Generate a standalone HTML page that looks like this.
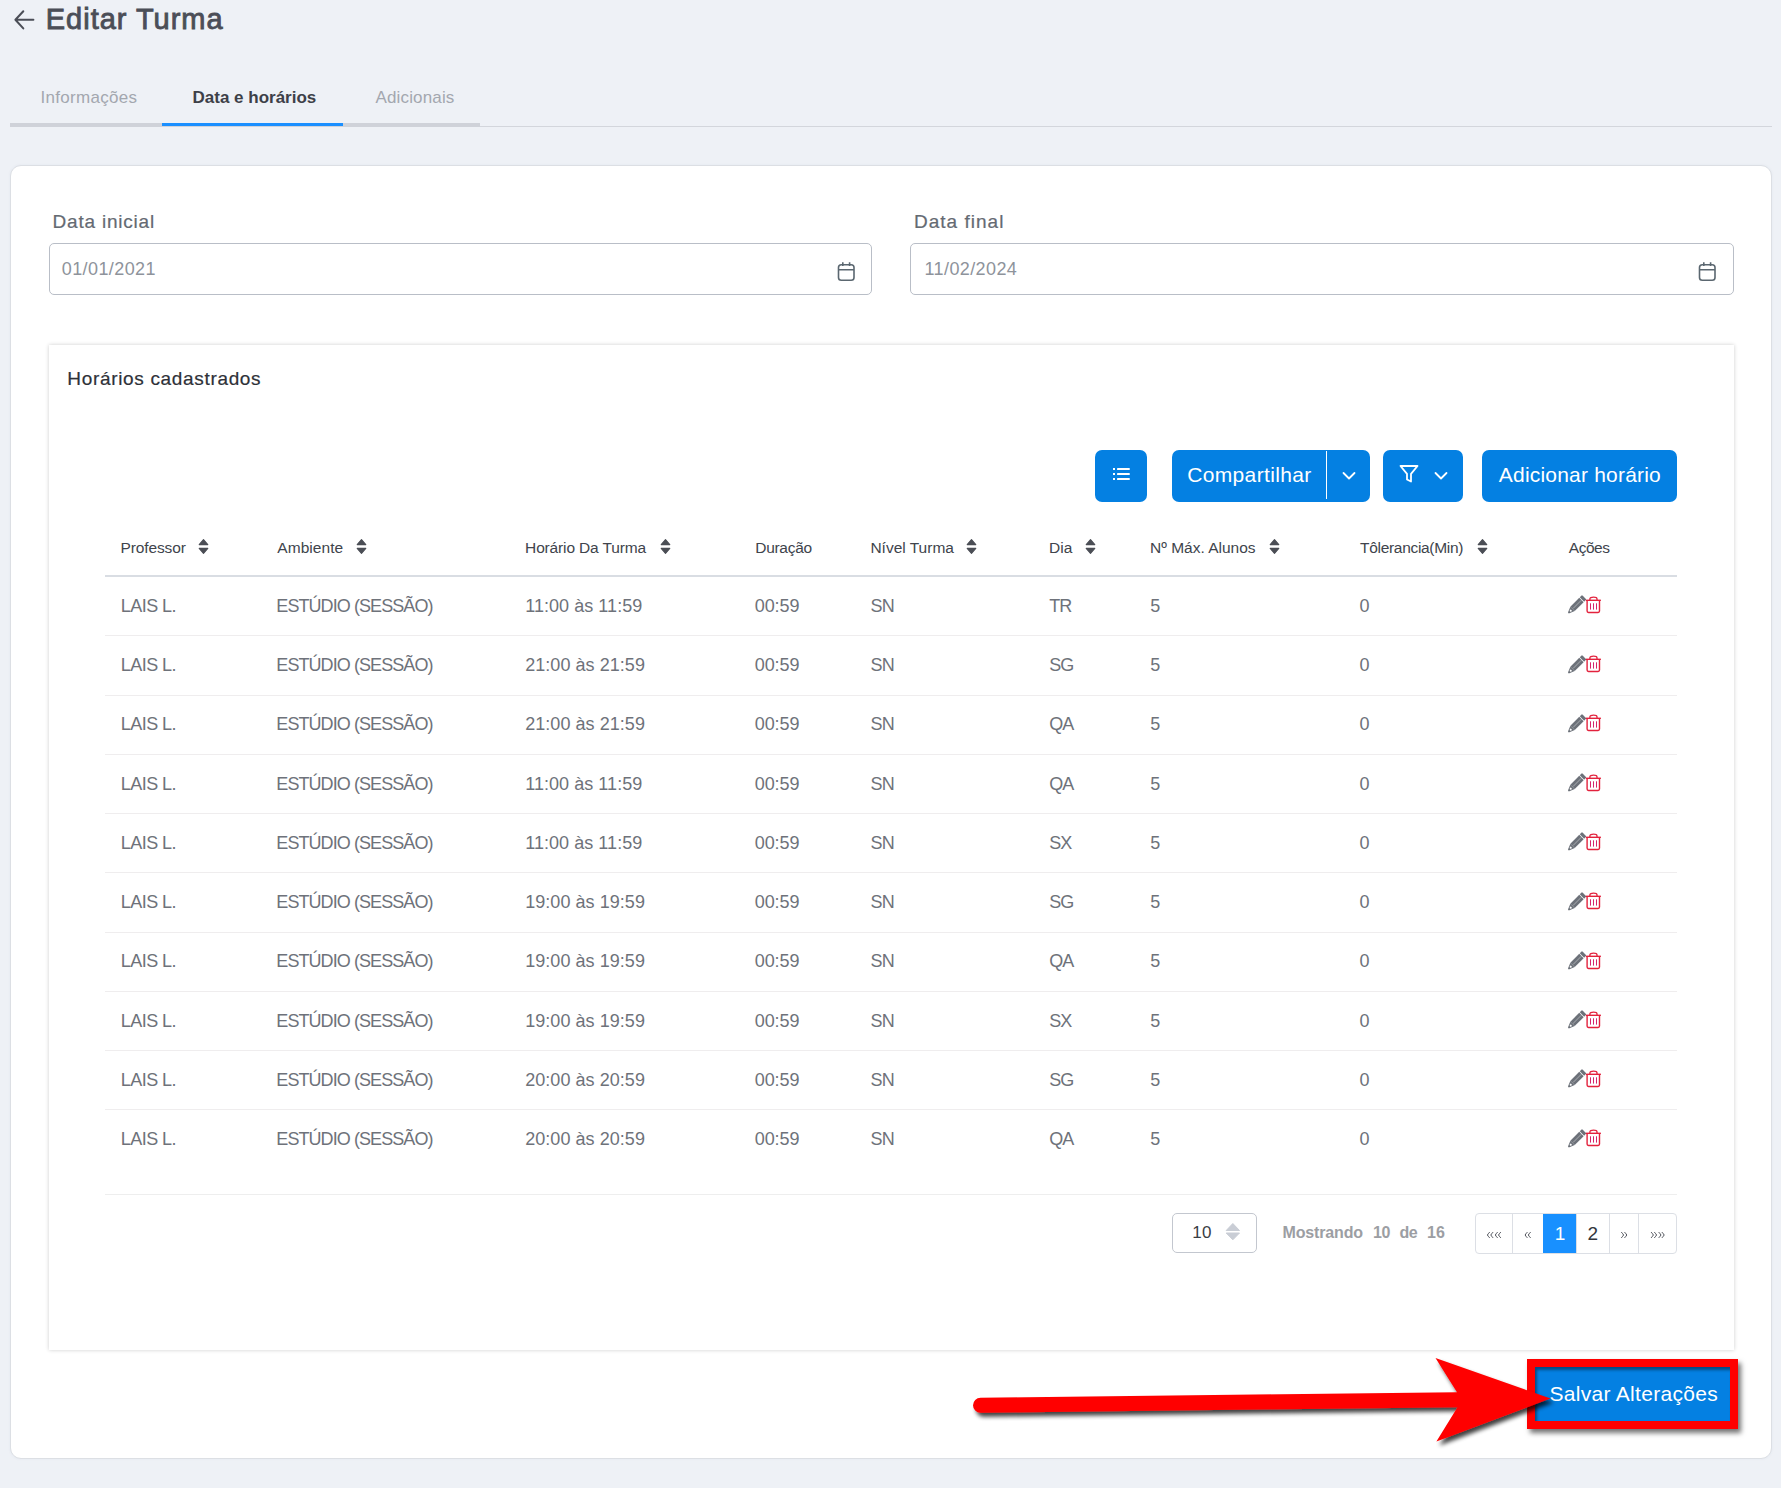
<!DOCTYPE html>
<html><head><meta charset="utf-8">
<style>
*{box-sizing:border-box;margin:0;padding:0}
html,body{width:1781px;height:1488px;overflow:hidden;background:#eef1f6;font-family:"Liberation Sans",sans-serif}
.a{position:absolute;white-space:pre;line-height:1}
.b{position:absolute}
</style></head><body>
<svg class="b" style="left:13px;top:9px" width="24" height="22" viewBox="0 0 24 22"><path d="M20.4 10.8H3M10.3 2.2L2.4 10.8L10.3 19.4" fill="none" stroke="#4b4e57" stroke-width="2" stroke-linecap="round" stroke-linejoin="round"/></svg>
<div class="a" style="left:45.8px;top:5.4px;font-size:29px;font-weight:400;color:#4b4e57;letter-spacing:0.98px;-webkit-text-stroke:0.85px #4b4e57">Editar Turma</div>
<div class="a" style="left:40.5px;top:88.5px;font-size:17px;font-weight:400;color:#a3a7af;letter-spacing:0.3px;">Informações</div>
<div class="a" style="left:192.5px;top:88.5px;font-size:17px;font-weight:700;color:#3d4048;letter-spacing:0px;">Data e horários</div>
<div class="a" style="left:375.5px;top:88.5px;font-size:17px;font-weight:400;color:#a3a7af;letter-spacing:0.15px;">Adicionais</div>
<div class="b" style="left:10px;top:126px;width:1762px;height:1px;background:#d3d6dc"></div>
<div class="b" style="left:10px;top:123px;width:470px;height:4px;background:#cfd2d9"></div>
<div class="b" style="left:162px;top:123px;width:181px;height:3px;background:#1a8fff"></div>
<div class="b" style="left:10px;top:165px;width:1762px;height:1294px;background:#fff;border:1px solid #dcdfe4;border-radius:11px;box-shadow:0 0 3px rgba(40,60,120,0.05)"></div>
<div class="a" style="left:52.6px;top:212.1px;font-size:19px;font-weight:400;color:#646a72;letter-spacing:0.78px;-webkit-text-stroke:0.2px #646a72">Data inicial</div>
<div class="a" style="left:913.9px;top:212.1px;font-size:19px;font-weight:400;color:#646a72;letter-spacing:1.03px;-webkit-text-stroke:0.2px #646a72">Data final</div>
<div class="b" style="left:49px;top:243px;width:823px;height:52px;border:1.5px solid #b9bec7;border-radius:5px"></div>
<div class="b" style="left:910px;top:243px;width:824px;height:52px;border:1.5px solid #b9bec7;border-radius:5px"></div>
<svg class="b" style="left:836.5px;top:261px" width="19" height="21" viewBox="0 0 19 21"><rect x="1.5" y="3.8" width="15.5" height="15.5" rx="2.8" fill="none" stroke="#5b6770" stroke-width="1.6"/><path d="M1.5 8.8H17M5.8 1.2V5M12.6 1.2V5" stroke="#5b6770" stroke-width="1.6" fill="none"/></svg>
<svg class="b" style="left:1697.5px;top:261px" width="19" height="21" viewBox="0 0 19 21"><rect x="1.5" y="3.8" width="15.5" height="15.5" rx="2.8" fill="none" stroke="#5b6770" stroke-width="1.6"/><path d="M1.5 8.8H17M5.8 1.2V5M12.6 1.2V5" stroke="#5b6770" stroke-width="1.6" fill="none"/></svg>
<div class="a" style="left:61.8px;top:259.8px;font-size:18px;font-weight:400;color:#8e939b;letter-spacing:0.4px;">01/01/2021</div>
<div class="a" style="left:924.5px;top:259.8px;font-size:18px;font-weight:400;color:#8e939b;letter-spacing:0.4px;">11/02/2024</div>
<div class="b" style="left:49px;top:345px;width:1685px;height:1005px;background:#fff;box-shadow:0 0 4px rgba(0,0,0,0.2)"></div>
<div class="a" style="left:67.3px;top:369.1px;font-size:19px;font-weight:400;color:#2e3138;letter-spacing:0.67px;-webkit-text-stroke:0.2px #2e3138">Horários cadastrados</div>
<div class="b" style="left:1095px;top:450px;width:52px;height:52px;background:#0480e2;border-radius:7px"></div>
<svg class="b" style="left:1112px;top:466px" width="19" height="16" viewBox="0 0 19 16"><g fill="#fff"><rect x="1" y="2" width="2" height="2"/><rect x="1" y="7" width="2" height="2"/><rect x="1" y="12" width="2" height="2"/><rect x="5" y="2" width="12.8" height="2" rx="0.4"/><rect x="5" y="7" width="12.8" height="2" rx="0.4"/><rect x="5" y="12" width="12.8" height="2" rx="0.4"/></g></svg>
<div class="b" style="left:1172px;top:450px;width:198px;height:52px;background:#0480e2;border-radius:7px"></div>
<div class="b" style="left:1326px;top:451px;width:1.2px;height:48px;background:#fff"></div>
<svg class="b" style="left:1340.5px;top:470px" width="16" height="11" viewBox="0 0 16 11"><path d="M2.5 3L8 8.5L13.5 3" fill="none" stroke="#fff" stroke-width="1.8" stroke-linecap="round" stroke-linejoin="round"/></svg>
<div class="a" style="left:1187.2px;top:464.3px;font-size:21px;font-weight:400;color:#fff;letter-spacing:0.35px;">Compartilhar</div>
<div class="b" style="left:1383px;top:450px;width:80px;height:52px;background:#0480e2;border-radius:7px"></div>
<svg class="b" style="left:1398px;top:464px" width="22" height="20" viewBox="0 0 22 20"><path d="M2.5 2H19.5L13 9.8V17.5L9 15.5V9.8Z" fill="none" stroke="#fff" stroke-width="1.8" stroke-linejoin="round"/></svg>
<svg class="b" style="left:1433px;top:470px" width="16" height="11" viewBox="0 0 16 11"><path d="M2.5 3L8 8.5L13.5 3" fill="none" stroke="#fff" stroke-width="1.8" stroke-linecap="round" stroke-linejoin="round"/></svg>
<div class="b" style="left:1482px;top:450px;width:195px;height:52px;background:#0480e2;border-radius:7px"></div>
<div class="a" style="left:1498.8px;top:464.2px;font-size:21px;font-weight:400;color:#fff;letter-spacing:0.2px;">Adicionar horário</div>
<div class="a" style="left:120.4px;top:540.1px;font-size:15.5px;font-weight:400;color:#40444c;letter-spacing:-0.1px;">Professor</div>
<svg class="b" style="left:198.3px;top:538px" width="11" height="17" viewBox="0 0 11 17"><path d="M5.5 1.6L9.8 6.6H1.2Z M1.2 10.4H9.8L5.5 15.4Z" fill="#4b4e55" stroke="#4b4e55" stroke-width="1.1" stroke-linejoin="round"/></svg>
<div class="a" style="left:277.3px;top:540.1px;font-size:15.5px;font-weight:400;color:#40444c;letter-spacing:0.05px;">Ambiente</div>
<svg class="b" style="left:355.5px;top:538px" width="11" height="17" viewBox="0 0 11 17"><path d="M5.5 1.6L9.8 6.6H1.2Z M1.2 10.4H9.8L5.5 15.4Z" fill="#4b4e55" stroke="#4b4e55" stroke-width="1.1" stroke-linejoin="round"/></svg>
<div class="a" style="left:525.1px;top:540.1px;font-size:15.5px;font-weight:400;color:#40444c;letter-spacing:-0.15px;">Horário Da Turma</div>
<svg class="b" style="left:659.5px;top:538px" width="11" height="17" viewBox="0 0 11 17"><path d="M5.5 1.6L9.8 6.6H1.2Z M1.2 10.4H9.8L5.5 15.4Z" fill="#4b4e55" stroke="#4b4e55" stroke-width="1.1" stroke-linejoin="round"/></svg>
<div class="a" style="left:755.3px;top:540.1px;font-size:15.5px;font-weight:400;color:#40444c;letter-spacing:-0.3px;">Duração</div>
<div class="a" style="left:870.4px;top:540.1px;font-size:15.5px;font-weight:400;color:#40444c;letter-spacing:0px;">Nível Turma</div>
<svg class="b" style="left:966.1px;top:538px" width="11" height="17" viewBox="0 0 11 17"><path d="M5.5 1.6L9.8 6.6H1.2Z M1.2 10.4H9.8L5.5 15.4Z" fill="#4b4e55" stroke="#4b4e55" stroke-width="1.1" stroke-linejoin="round"/></svg>
<div class="a" style="left:1049.0px;top:540.1px;font-size:15.5px;font-weight:400;color:#40444c;letter-spacing:0px;">Dia</div>
<svg class="b" style="left:1085.1px;top:538px" width="11" height="17" viewBox="0 0 11 17"><path d="M5.5 1.6L9.8 6.6H1.2Z M1.2 10.4H9.8L5.5 15.4Z" fill="#4b4e55" stroke="#4b4e55" stroke-width="1.1" stroke-linejoin="round"/></svg>
<div class="a" style="left:1150.0px;top:540.1px;font-size:15.5px;font-weight:400;color:#40444c;letter-spacing:0px;">Nº Máx. Alunos</div>
<svg class="b" style="left:1269.2px;top:538px" width="11" height="17" viewBox="0 0 11 17"><path d="M5.5 1.6L9.8 6.6H1.2Z M1.2 10.4H9.8L5.5 15.4Z" fill="#4b4e55" stroke="#4b4e55" stroke-width="1.1" stroke-linejoin="round"/></svg>
<div class="a" style="left:1360.0px;top:540.1px;font-size:15.5px;font-weight:400;color:#40444c;letter-spacing:-0.3px;">Tôlerancia(Min)</div>
<svg class="b" style="left:1477.3px;top:538px" width="11" height="17" viewBox="0 0 11 17"><path d="M5.5 1.6L9.8 6.6H1.2Z M1.2 10.4H9.8L5.5 15.4Z" fill="#4b4e55" stroke="#4b4e55" stroke-width="1.1" stroke-linejoin="round"/></svg>
<div class="a" style="left:1568.8px;top:540.1px;font-size:15.5px;font-weight:400;color:#40444c;letter-spacing:-0.5px;">Ações</div>
<div class="b" style="left:105px;top:575px;width:1572px;height:2px;background:#d9dde3"></div>
<div class="a" style="left:120.8px;top:596.9px;font-size:18px;font-weight:400;color:#6e727a;letter-spacing:-0.55px;">LAIS L.</div>
<div class="a" style="left:276.3px;top:596.9px;font-size:18px;font-weight:400;color:#6e727a;letter-spacing:-0.92px;">ESTÚDIO (SESSÃO)</div>
<div class="a" style="left:525.2px;top:596.9px;font-size:18px;font-weight:400;color:#6e727a;letter-spacing:0.05px;">11:00 às 11:59</div>
<div class="a" style="left:754.8px;top:596.9px;font-size:18px;font-weight:400;color:#6e727a;letter-spacing:-0.1px;">00:59</div>
<div class="a" style="left:870.6px;top:596.9px;font-size:18px;font-weight:400;color:#6e727a;letter-spacing:-0.9px;">SN</div>
<div class="a" style="left:1049.2px;top:596.9px;font-size:18px;font-weight:400;color:#6e727a;letter-spacing:-0.9px;">TR</div>
<div class="a" style="left:1150.3px;top:596.9px;font-size:18px;font-weight:400;color:#6e727a;letter-spacing:0px;">5</div>
<div class="a" style="left:1359.5px;top:596.9px;font-size:18px;font-weight:400;color:#6e727a;letter-spacing:0px;">0</div>
<svg class="b" style="left:1567px;top:595.3px" width="19" height="19" viewBox="0 0 19 19"><g transform="translate(9.3 10.1) rotate(45)"><path d="M-3.1 -8V-10.2Q-3.1 -11.2 -2.1 -11.2H2.1Q3.1 -11.2 3.1 -10.2V-8Z" fill="#6c7179"/><rect x="-3.1" y="-7.3" width="6.2" height="12.6" fill="#6c7179"/><path d="M-3.1 5.3H3.1L0.6 11.2H-0.6Z" fill="#6c7179"/><path d="M0.1 -7V4.6" stroke="#fff" stroke-width="0.55" opacity="0.7"/><circle cx="0" cy="7.9" r="1.05" fill="#fff"/></g></svg>
<svg class="b" style="left:1585px;top:596px" width="17" height="19" viewBox="0 0 17 19"><path d="M0.8 4.3H15.9" stroke="#e3223d" stroke-width="1.4"/><path d="M4.9 4.2V2.8Q4.9 1.2 8.45 1.2Q12 1.2 12 2.8V4.2" fill="none" stroke="#e3223d" stroke-width="1.3"/><path d="M2.1 4.3V15.1Q2.1 16.5 3.5 16.5H13.1Q14.5 16.5 14.5 15.1V4.3" fill="none" stroke="#e3223d" stroke-width="1.4"/><path d="M5.5 7.3V13.6M8.5 7.3V13.6M11.5 7.3V13.6" stroke="#d6246c" stroke-width="1"/></svg>
<div class="b" style="left:105px;top:635px;width:1572px;height:1px;background:#efedee"></div>
<div class="a" style="left:120.8px;top:656.1px;font-size:18px;font-weight:400;color:#6e727a;letter-spacing:-0.55px;">LAIS L.</div>
<div class="a" style="left:276.3px;top:656.1px;font-size:18px;font-weight:400;color:#6e727a;letter-spacing:-0.92px;">ESTÚDIO (SESSÃO)</div>
<div class="a" style="left:525.2px;top:656.1px;font-size:18px;font-weight:400;color:#6e727a;letter-spacing:0.05px;">21:00 às 21:59</div>
<div class="a" style="left:754.8px;top:656.1px;font-size:18px;font-weight:400;color:#6e727a;letter-spacing:-0.1px;">00:59</div>
<div class="a" style="left:870.6px;top:656.1px;font-size:18px;font-weight:400;color:#6e727a;letter-spacing:-0.9px;">SN</div>
<div class="a" style="left:1049.2px;top:656.1px;font-size:18px;font-weight:400;color:#6e727a;letter-spacing:-0.9px;">SG</div>
<div class="a" style="left:1150.3px;top:656.1px;font-size:18px;font-weight:400;color:#6e727a;letter-spacing:0px;">5</div>
<div class="a" style="left:1359.5px;top:656.1px;font-size:18px;font-weight:400;color:#6e727a;letter-spacing:0px;">0</div>
<svg class="b" style="left:1567px;top:654.6px" width="19" height="19" viewBox="0 0 19 19"><g transform="translate(9.3 10.1) rotate(45)"><path d="M-3.1 -8V-10.2Q-3.1 -11.2 -2.1 -11.2H2.1Q3.1 -11.2 3.1 -10.2V-8Z" fill="#6c7179"/><rect x="-3.1" y="-7.3" width="6.2" height="12.6" fill="#6c7179"/><path d="M-3.1 5.3H3.1L0.6 11.2H-0.6Z" fill="#6c7179"/><path d="M0.1 -7V4.6" stroke="#fff" stroke-width="0.55" opacity="0.7"/><circle cx="0" cy="7.9" r="1.05" fill="#fff"/></g></svg>
<svg class="b" style="left:1585px;top:655px" width="17" height="19" viewBox="0 0 17 19"><path d="M0.8 4.3H15.9" stroke="#e3223d" stroke-width="1.4"/><path d="M4.9 4.2V2.8Q4.9 1.2 8.45 1.2Q12 1.2 12 2.8V4.2" fill="none" stroke="#e3223d" stroke-width="1.3"/><path d="M2.1 4.3V15.1Q2.1 16.5 3.5 16.5H13.1Q14.5 16.5 14.5 15.1V4.3" fill="none" stroke="#e3223d" stroke-width="1.4"/><path d="M5.5 7.3V13.6M8.5 7.3V13.6M11.5 7.3V13.6" stroke="#d6246c" stroke-width="1"/></svg>
<div class="b" style="left:105px;top:695px;width:1572px;height:1px;background:#efedee"></div>
<div class="a" style="left:120.8px;top:715.4px;font-size:18px;font-weight:400;color:#6e727a;letter-spacing:-0.55px;">LAIS L.</div>
<div class="a" style="left:276.3px;top:715.4px;font-size:18px;font-weight:400;color:#6e727a;letter-spacing:-0.92px;">ESTÚDIO (SESSÃO)</div>
<div class="a" style="left:525.2px;top:715.4px;font-size:18px;font-weight:400;color:#6e727a;letter-spacing:0.05px;">21:00 às 21:59</div>
<div class="a" style="left:754.8px;top:715.4px;font-size:18px;font-weight:400;color:#6e727a;letter-spacing:-0.1px;">00:59</div>
<div class="a" style="left:870.6px;top:715.4px;font-size:18px;font-weight:400;color:#6e727a;letter-spacing:-0.9px;">SN</div>
<div class="a" style="left:1049.2px;top:715.4px;font-size:18px;font-weight:400;color:#6e727a;letter-spacing:-0.9px;">QA</div>
<div class="a" style="left:1150.3px;top:715.4px;font-size:18px;font-weight:400;color:#6e727a;letter-spacing:0px;">5</div>
<div class="a" style="left:1359.5px;top:715.4px;font-size:18px;font-weight:400;color:#6e727a;letter-spacing:0px;">0</div>
<svg class="b" style="left:1567px;top:713.8px" width="19" height="19" viewBox="0 0 19 19"><g transform="translate(9.3 10.1) rotate(45)"><path d="M-3.1 -8V-10.2Q-3.1 -11.2 -2.1 -11.2H2.1Q3.1 -11.2 3.1 -10.2V-8Z" fill="#6c7179"/><rect x="-3.1" y="-7.3" width="6.2" height="12.6" fill="#6c7179"/><path d="M-3.1 5.3H3.1L0.6 11.2H-0.6Z" fill="#6c7179"/><path d="M0.1 -7V4.6" stroke="#fff" stroke-width="0.55" opacity="0.7"/><circle cx="0" cy="7.9" r="1.05" fill="#fff"/></g></svg>
<svg class="b" style="left:1585px;top:714px" width="17" height="19" viewBox="0 0 17 19"><path d="M0.8 4.3H15.9" stroke="#e3223d" stroke-width="1.4"/><path d="M4.9 4.2V2.8Q4.9 1.2 8.45 1.2Q12 1.2 12 2.8V4.2" fill="none" stroke="#e3223d" stroke-width="1.3"/><path d="M2.1 4.3V15.1Q2.1 16.5 3.5 16.5H13.1Q14.5 16.5 14.5 15.1V4.3" fill="none" stroke="#e3223d" stroke-width="1.4"/><path d="M5.5 7.3V13.6M8.5 7.3V13.6M11.5 7.3V13.6" stroke="#d6246c" stroke-width="1"/></svg>
<div class="b" style="left:105px;top:754px;width:1572px;height:1px;background:#efedee"></div>
<div class="a" style="left:120.8px;top:774.6px;font-size:18px;font-weight:400;color:#6e727a;letter-spacing:-0.55px;">LAIS L.</div>
<div class="a" style="left:276.3px;top:774.6px;font-size:18px;font-weight:400;color:#6e727a;letter-spacing:-0.92px;">ESTÚDIO (SESSÃO)</div>
<div class="a" style="left:525.2px;top:774.6px;font-size:18px;font-weight:400;color:#6e727a;letter-spacing:0.05px;">11:00 às 11:59</div>
<div class="a" style="left:754.8px;top:774.6px;font-size:18px;font-weight:400;color:#6e727a;letter-spacing:-0.1px;">00:59</div>
<div class="a" style="left:870.6px;top:774.6px;font-size:18px;font-weight:400;color:#6e727a;letter-spacing:-0.9px;">SN</div>
<div class="a" style="left:1049.2px;top:774.6px;font-size:18px;font-weight:400;color:#6e727a;letter-spacing:-0.9px;">QA</div>
<div class="a" style="left:1150.3px;top:774.6px;font-size:18px;font-weight:400;color:#6e727a;letter-spacing:0px;">5</div>
<div class="a" style="left:1359.5px;top:774.6px;font-size:18px;font-weight:400;color:#6e727a;letter-spacing:0px;">0</div>
<svg class="b" style="left:1567px;top:773.1px" width="19" height="19" viewBox="0 0 19 19"><g transform="translate(9.3 10.1) rotate(45)"><path d="M-3.1 -8V-10.2Q-3.1 -11.2 -2.1 -11.2H2.1Q3.1 -11.2 3.1 -10.2V-8Z" fill="#6c7179"/><rect x="-3.1" y="-7.3" width="6.2" height="12.6" fill="#6c7179"/><path d="M-3.1 5.3H3.1L0.6 11.2H-0.6Z" fill="#6c7179"/><path d="M0.1 -7V4.6" stroke="#fff" stroke-width="0.55" opacity="0.7"/><circle cx="0" cy="7.9" r="1.05" fill="#fff"/></g></svg>
<svg class="b" style="left:1585px;top:774px" width="17" height="19" viewBox="0 0 17 19"><path d="M0.8 4.3H15.9" stroke="#e3223d" stroke-width="1.4"/><path d="M4.9 4.2V2.8Q4.9 1.2 8.45 1.2Q12 1.2 12 2.8V4.2" fill="none" stroke="#e3223d" stroke-width="1.3"/><path d="M2.1 4.3V15.1Q2.1 16.5 3.5 16.5H13.1Q14.5 16.5 14.5 15.1V4.3" fill="none" stroke="#e3223d" stroke-width="1.4"/><path d="M5.5 7.3V13.6M8.5 7.3V13.6M11.5 7.3V13.6" stroke="#d6246c" stroke-width="1"/></svg>
<div class="b" style="left:105px;top:813px;width:1572px;height:1px;background:#efedee"></div>
<div class="a" style="left:120.8px;top:833.9px;font-size:18px;font-weight:400;color:#6e727a;letter-spacing:-0.55px;">LAIS L.</div>
<div class="a" style="left:276.3px;top:833.9px;font-size:18px;font-weight:400;color:#6e727a;letter-spacing:-0.92px;">ESTÚDIO (SESSÃO)</div>
<div class="a" style="left:525.2px;top:833.9px;font-size:18px;font-weight:400;color:#6e727a;letter-spacing:0.05px;">11:00 às 11:59</div>
<div class="a" style="left:754.8px;top:833.9px;font-size:18px;font-weight:400;color:#6e727a;letter-spacing:-0.1px;">00:59</div>
<div class="a" style="left:870.6px;top:833.9px;font-size:18px;font-weight:400;color:#6e727a;letter-spacing:-0.9px;">SN</div>
<div class="a" style="left:1049.2px;top:833.9px;font-size:18px;font-weight:400;color:#6e727a;letter-spacing:-0.9px;">SX</div>
<div class="a" style="left:1150.3px;top:833.9px;font-size:18px;font-weight:400;color:#6e727a;letter-spacing:0px;">5</div>
<div class="a" style="left:1359.5px;top:833.9px;font-size:18px;font-weight:400;color:#6e727a;letter-spacing:0px;">0</div>
<svg class="b" style="left:1567px;top:832.3px" width="19" height="19" viewBox="0 0 19 19"><g transform="translate(9.3 10.1) rotate(45)"><path d="M-3.1 -8V-10.2Q-3.1 -11.2 -2.1 -11.2H2.1Q3.1 -11.2 3.1 -10.2V-8Z" fill="#6c7179"/><rect x="-3.1" y="-7.3" width="6.2" height="12.6" fill="#6c7179"/><path d="M-3.1 5.3H3.1L0.6 11.2H-0.6Z" fill="#6c7179"/><path d="M0.1 -7V4.6" stroke="#fff" stroke-width="0.55" opacity="0.7"/><circle cx="0" cy="7.9" r="1.05" fill="#fff"/></g></svg>
<svg class="b" style="left:1585px;top:833px" width="17" height="19" viewBox="0 0 17 19"><path d="M0.8 4.3H15.9" stroke="#e3223d" stroke-width="1.4"/><path d="M4.9 4.2V2.8Q4.9 1.2 8.45 1.2Q12 1.2 12 2.8V4.2" fill="none" stroke="#e3223d" stroke-width="1.3"/><path d="M2.1 4.3V15.1Q2.1 16.5 3.5 16.5H13.1Q14.5 16.5 14.5 15.1V4.3" fill="none" stroke="#e3223d" stroke-width="1.4"/><path d="M5.5 7.3V13.6M8.5 7.3V13.6M11.5 7.3V13.6" stroke="#d6246c" stroke-width="1"/></svg>
<div class="b" style="left:105px;top:872px;width:1572px;height:1px;background:#efedee"></div>
<div class="a" style="left:120.8px;top:893.1px;font-size:18px;font-weight:400;color:#6e727a;letter-spacing:-0.55px;">LAIS L.</div>
<div class="a" style="left:276.3px;top:893.1px;font-size:18px;font-weight:400;color:#6e727a;letter-spacing:-0.92px;">ESTÚDIO (SESSÃO)</div>
<div class="a" style="left:525.2px;top:893.1px;font-size:18px;font-weight:400;color:#6e727a;letter-spacing:0.05px;">19:00 às 19:59</div>
<div class="a" style="left:754.8px;top:893.1px;font-size:18px;font-weight:400;color:#6e727a;letter-spacing:-0.1px;">00:59</div>
<div class="a" style="left:870.6px;top:893.1px;font-size:18px;font-weight:400;color:#6e727a;letter-spacing:-0.9px;">SN</div>
<div class="a" style="left:1049.2px;top:893.1px;font-size:18px;font-weight:400;color:#6e727a;letter-spacing:-0.9px;">SG</div>
<div class="a" style="left:1150.3px;top:893.1px;font-size:18px;font-weight:400;color:#6e727a;letter-spacing:0px;">5</div>
<div class="a" style="left:1359.5px;top:893.1px;font-size:18px;font-weight:400;color:#6e727a;letter-spacing:0px;">0</div>
<svg class="b" style="left:1567px;top:891.6px" width="19" height="19" viewBox="0 0 19 19"><g transform="translate(9.3 10.1) rotate(45)"><path d="M-3.1 -8V-10.2Q-3.1 -11.2 -2.1 -11.2H2.1Q3.1 -11.2 3.1 -10.2V-8Z" fill="#6c7179"/><rect x="-3.1" y="-7.3" width="6.2" height="12.6" fill="#6c7179"/><path d="M-3.1 5.3H3.1L0.6 11.2H-0.6Z" fill="#6c7179"/><path d="M0.1 -7V4.6" stroke="#fff" stroke-width="0.55" opacity="0.7"/><circle cx="0" cy="7.9" r="1.05" fill="#fff"/></g></svg>
<svg class="b" style="left:1585px;top:892px" width="17" height="19" viewBox="0 0 17 19"><path d="M0.8 4.3H15.9" stroke="#e3223d" stroke-width="1.4"/><path d="M4.9 4.2V2.8Q4.9 1.2 8.45 1.2Q12 1.2 12 2.8V4.2" fill="none" stroke="#e3223d" stroke-width="1.3"/><path d="M2.1 4.3V15.1Q2.1 16.5 3.5 16.5H13.1Q14.5 16.5 14.5 15.1V4.3" fill="none" stroke="#e3223d" stroke-width="1.4"/><path d="M5.5 7.3V13.6M8.5 7.3V13.6M11.5 7.3V13.6" stroke="#d6246c" stroke-width="1"/></svg>
<div class="b" style="left:105px;top:932px;width:1572px;height:1px;background:#efedee"></div>
<div class="a" style="left:120.8px;top:952.4px;font-size:18px;font-weight:400;color:#6e727a;letter-spacing:-0.55px;">LAIS L.</div>
<div class="a" style="left:276.3px;top:952.4px;font-size:18px;font-weight:400;color:#6e727a;letter-spacing:-0.92px;">ESTÚDIO (SESSÃO)</div>
<div class="a" style="left:525.2px;top:952.4px;font-size:18px;font-weight:400;color:#6e727a;letter-spacing:0.05px;">19:00 às 19:59</div>
<div class="a" style="left:754.8px;top:952.4px;font-size:18px;font-weight:400;color:#6e727a;letter-spacing:-0.1px;">00:59</div>
<div class="a" style="left:870.6px;top:952.4px;font-size:18px;font-weight:400;color:#6e727a;letter-spacing:-0.9px;">SN</div>
<div class="a" style="left:1049.2px;top:952.4px;font-size:18px;font-weight:400;color:#6e727a;letter-spacing:-0.9px;">QA</div>
<div class="a" style="left:1150.3px;top:952.4px;font-size:18px;font-weight:400;color:#6e727a;letter-spacing:0px;">5</div>
<div class="a" style="left:1359.5px;top:952.4px;font-size:18px;font-weight:400;color:#6e727a;letter-spacing:0px;">0</div>
<svg class="b" style="left:1567px;top:950.8px" width="19" height="19" viewBox="0 0 19 19"><g transform="translate(9.3 10.1) rotate(45)"><path d="M-3.1 -8V-10.2Q-3.1 -11.2 -2.1 -11.2H2.1Q3.1 -11.2 3.1 -10.2V-8Z" fill="#6c7179"/><rect x="-3.1" y="-7.3" width="6.2" height="12.6" fill="#6c7179"/><path d="M-3.1 5.3H3.1L0.6 11.2H-0.6Z" fill="#6c7179"/><path d="M0.1 -7V4.6" stroke="#fff" stroke-width="0.55" opacity="0.7"/><circle cx="0" cy="7.9" r="1.05" fill="#fff"/></g></svg>
<svg class="b" style="left:1585px;top:952px" width="17" height="19" viewBox="0 0 17 19"><path d="M0.8 4.3H15.9" stroke="#e3223d" stroke-width="1.4"/><path d="M4.9 4.2V2.8Q4.9 1.2 8.45 1.2Q12 1.2 12 2.8V4.2" fill="none" stroke="#e3223d" stroke-width="1.3"/><path d="M2.1 4.3V15.1Q2.1 16.5 3.5 16.5H13.1Q14.5 16.5 14.5 15.1V4.3" fill="none" stroke="#e3223d" stroke-width="1.4"/><path d="M5.5 7.3V13.6M8.5 7.3V13.6M11.5 7.3V13.6" stroke="#d6246c" stroke-width="1"/></svg>
<div class="b" style="left:105px;top:991px;width:1572px;height:1px;background:#efedee"></div>
<div class="a" style="left:120.8px;top:1011.6px;font-size:18px;font-weight:400;color:#6e727a;letter-spacing:-0.55px;">LAIS L.</div>
<div class="a" style="left:276.3px;top:1011.6px;font-size:18px;font-weight:400;color:#6e727a;letter-spacing:-0.92px;">ESTÚDIO (SESSÃO)</div>
<div class="a" style="left:525.2px;top:1011.6px;font-size:18px;font-weight:400;color:#6e727a;letter-spacing:0.05px;">19:00 às 19:59</div>
<div class="a" style="left:754.8px;top:1011.6px;font-size:18px;font-weight:400;color:#6e727a;letter-spacing:-0.1px;">00:59</div>
<div class="a" style="left:870.6px;top:1011.6px;font-size:18px;font-weight:400;color:#6e727a;letter-spacing:-0.9px;">SN</div>
<div class="a" style="left:1049.2px;top:1011.6px;font-size:18px;font-weight:400;color:#6e727a;letter-spacing:-0.9px;">SX</div>
<div class="a" style="left:1150.3px;top:1011.6px;font-size:18px;font-weight:400;color:#6e727a;letter-spacing:0px;">5</div>
<div class="a" style="left:1359.5px;top:1011.6px;font-size:18px;font-weight:400;color:#6e727a;letter-spacing:0px;">0</div>
<svg class="b" style="left:1567px;top:1010.1px" width="19" height="19" viewBox="0 0 19 19"><g transform="translate(9.3 10.1) rotate(45)"><path d="M-3.1 -8V-10.2Q-3.1 -11.2 -2.1 -11.2H2.1Q3.1 -11.2 3.1 -10.2V-8Z" fill="#6c7179"/><rect x="-3.1" y="-7.3" width="6.2" height="12.6" fill="#6c7179"/><path d="M-3.1 5.3H3.1L0.6 11.2H-0.6Z" fill="#6c7179"/><path d="M0.1 -7V4.6" stroke="#fff" stroke-width="0.55" opacity="0.7"/><circle cx="0" cy="7.9" r="1.05" fill="#fff"/></g></svg>
<svg class="b" style="left:1585px;top:1011px" width="17" height="19" viewBox="0 0 17 19"><path d="M0.8 4.3H15.9" stroke="#e3223d" stroke-width="1.4"/><path d="M4.9 4.2V2.8Q4.9 1.2 8.45 1.2Q12 1.2 12 2.8V4.2" fill="none" stroke="#e3223d" stroke-width="1.3"/><path d="M2.1 4.3V15.1Q2.1 16.5 3.5 16.5H13.1Q14.5 16.5 14.5 15.1V4.3" fill="none" stroke="#e3223d" stroke-width="1.4"/><path d="M5.5 7.3V13.6M8.5 7.3V13.6M11.5 7.3V13.6" stroke="#d6246c" stroke-width="1"/></svg>
<div class="b" style="left:105px;top:1050px;width:1572px;height:1px;background:#efedee"></div>
<div class="a" style="left:120.8px;top:1070.9px;font-size:18px;font-weight:400;color:#6e727a;letter-spacing:-0.55px;">LAIS L.</div>
<div class="a" style="left:276.3px;top:1070.9px;font-size:18px;font-weight:400;color:#6e727a;letter-spacing:-0.92px;">ESTÚDIO (SESSÃO)</div>
<div class="a" style="left:525.2px;top:1070.9px;font-size:18px;font-weight:400;color:#6e727a;letter-spacing:0.05px;">20:00 às 20:59</div>
<div class="a" style="left:754.8px;top:1070.9px;font-size:18px;font-weight:400;color:#6e727a;letter-spacing:-0.1px;">00:59</div>
<div class="a" style="left:870.6px;top:1070.9px;font-size:18px;font-weight:400;color:#6e727a;letter-spacing:-0.9px;">SN</div>
<div class="a" style="left:1049.2px;top:1070.9px;font-size:18px;font-weight:400;color:#6e727a;letter-spacing:-0.9px;">SG</div>
<div class="a" style="left:1150.3px;top:1070.9px;font-size:18px;font-weight:400;color:#6e727a;letter-spacing:0px;">5</div>
<div class="a" style="left:1359.5px;top:1070.9px;font-size:18px;font-weight:400;color:#6e727a;letter-spacing:0px;">0</div>
<svg class="b" style="left:1567px;top:1069.3px" width="19" height="19" viewBox="0 0 19 19"><g transform="translate(9.3 10.1) rotate(45)"><path d="M-3.1 -8V-10.2Q-3.1 -11.2 -2.1 -11.2H2.1Q3.1 -11.2 3.1 -10.2V-8Z" fill="#6c7179"/><rect x="-3.1" y="-7.3" width="6.2" height="12.6" fill="#6c7179"/><path d="M-3.1 5.3H3.1L0.6 11.2H-0.6Z" fill="#6c7179"/><path d="M0.1 -7V4.6" stroke="#fff" stroke-width="0.55" opacity="0.7"/><circle cx="0" cy="7.9" r="1.05" fill="#fff"/></g></svg>
<svg class="b" style="left:1585px;top:1070px" width="17" height="19" viewBox="0 0 17 19"><path d="M0.8 4.3H15.9" stroke="#e3223d" stroke-width="1.4"/><path d="M4.9 4.2V2.8Q4.9 1.2 8.45 1.2Q12 1.2 12 2.8V4.2" fill="none" stroke="#e3223d" stroke-width="1.3"/><path d="M2.1 4.3V15.1Q2.1 16.5 3.5 16.5H13.1Q14.5 16.5 14.5 15.1V4.3" fill="none" stroke="#e3223d" stroke-width="1.4"/><path d="M5.5 7.3V13.6M8.5 7.3V13.6M11.5 7.3V13.6" stroke="#d6246c" stroke-width="1"/></svg>
<div class="b" style="left:105px;top:1109px;width:1572px;height:1px;background:#efedee"></div>
<div class="a" style="left:120.8px;top:1130.1px;font-size:18px;font-weight:400;color:#6e727a;letter-spacing:-0.55px;">LAIS L.</div>
<div class="a" style="left:276.3px;top:1130.1px;font-size:18px;font-weight:400;color:#6e727a;letter-spacing:-0.92px;">ESTÚDIO (SESSÃO)</div>
<div class="a" style="left:525.2px;top:1130.1px;font-size:18px;font-weight:400;color:#6e727a;letter-spacing:0.05px;">20:00 às 20:59</div>
<div class="a" style="left:754.8px;top:1130.1px;font-size:18px;font-weight:400;color:#6e727a;letter-spacing:-0.1px;">00:59</div>
<div class="a" style="left:870.6px;top:1130.1px;font-size:18px;font-weight:400;color:#6e727a;letter-spacing:-0.9px;">SN</div>
<div class="a" style="left:1049.2px;top:1130.1px;font-size:18px;font-weight:400;color:#6e727a;letter-spacing:-0.9px;">QA</div>
<div class="a" style="left:1150.3px;top:1130.1px;font-size:18px;font-weight:400;color:#6e727a;letter-spacing:0px;">5</div>
<div class="a" style="left:1359.5px;top:1130.1px;font-size:18px;font-weight:400;color:#6e727a;letter-spacing:0px;">0</div>
<svg class="b" style="left:1567px;top:1128.5px" width="19" height="19" viewBox="0 0 19 19"><g transform="translate(9.3 10.1) rotate(45)"><path d="M-3.1 -8V-10.2Q-3.1 -11.2 -2.1 -11.2H2.1Q3.1 -11.2 3.1 -10.2V-8Z" fill="#6c7179"/><rect x="-3.1" y="-7.3" width="6.2" height="12.6" fill="#6c7179"/><path d="M-3.1 5.3H3.1L0.6 11.2H-0.6Z" fill="#6c7179"/><path d="M0.1 -7V4.6" stroke="#fff" stroke-width="0.55" opacity="0.7"/><circle cx="0" cy="7.9" r="1.05" fill="#fff"/></g></svg>
<svg class="b" style="left:1585px;top:1129px" width="17" height="19" viewBox="0 0 17 19"><path d="M0.8 4.3H15.9" stroke="#e3223d" stroke-width="1.4"/><path d="M4.9 4.2V2.8Q4.9 1.2 8.45 1.2Q12 1.2 12 2.8V4.2" fill="none" stroke="#e3223d" stroke-width="1.3"/><path d="M2.1 4.3V15.1Q2.1 16.5 3.5 16.5H13.1Q14.5 16.5 14.5 15.1V4.3" fill="none" stroke="#e3223d" stroke-width="1.4"/><path d="M5.5 7.3V13.6M8.5 7.3V13.6M11.5 7.3V13.6" stroke="#d6246c" stroke-width="1"/></svg>
<div class="b" style="left:105px;top:1194px;width:1572px;height:1px;background:#eeeeee"></div>
<div class="b" style="left:1172px;top:1213px;width:85px;height:40px;border:1.3px solid #c3c7cf;border-radius:5px"></div>
<div class="a" style="left:1192.3px;top:1223.9px;font-size:17px;font-weight:400;color:#3a3d44;letter-spacing:0.2px;">10</div>
<svg class="b" style="left:1224px;top:1221px" width="18" height="21" viewBox="0 0 18 21"><path d="M8.85 2.5L15.5 9.5H2.2Z M2.2 12H15.5L8.85 18.8Z" fill="#c9cdd5" stroke="#c9cdd5" stroke-width="1" stroke-linejoin="round"/></svg>
<div class="a" style="left:1282.5px;top:1224.5px;font-size:16px;font-weight:700;color:#9c9ea3;letter-spacing:-0.15px;">Mostrando</div>
<div class="a" style="left:1373.0px;top:1224.5px;font-size:16px;font-weight:700;color:#9c9ea3;letter-spacing:-0.3px;">10</div>
<div class="a" style="left:1399.5px;top:1224.5px;font-size:16px;font-weight:700;color:#9c9ea3;letter-spacing:-0.4px;">de</div>
<div class="a" style="left:1427.0px;top:1224.5px;font-size:16px;font-weight:700;color:#9c9ea3;letter-spacing:0px;">16</div>
<div class="b" style="left:1475px;top:1213px;width:202px;height:41px;border:1.3px solid #dcdfe5;border-radius:4px;overflow:hidden"></div>
<div class="b" style="left:1512px;top:1214px;width:1.3px;height:39px;background:#dcdfe5"></div>
<div class="b" style="left:1609px;top:1214px;width:1.3px;height:39px;background:#dcdfe5"></div>
<div class="b" style="left:1638px;top:1214px;width:1.3px;height:39px;background:#dcdfe5"></div>
<div class="b" style="left:1543px;top:1214px;width:33px;height:39px;background:#1890ff"></div>
<div class="b" style="left:1576px;top:1214px;width:1.3px;height:39px;background:#dcdfe5"></div>
<div class="a" style="left:1540.0px;top:1224.0px;width:40px;text-align:center;font-size:19px;color:#fff;letter-spacing:0px">1</div>
<div class="a" style="left:1572.7px;top:1224.0px;width:40px;text-align:center;font-size:19px;color:#33363c;letter-spacing:0px">2</div>
<svg class="b" style="left:0;top:0" width="1781" height="1488"><path d="M1489.7 1232.1Q1488.1 1233.8 1487.4 1235Q1488.1 1236.2 1489.7 1237.9M1493.1 1232.1Q1491.5 1233.8 1490.8 1235Q1491.5 1236.2 1493.1 1237.9M1497.6 1232.1Q1496.0 1233.8 1495.3 1235Q1496.0 1236.2 1497.6 1237.9M1500.8 1232.1Q1499.2 1233.8 1498.5 1235Q1499.2 1236.2 1500.8 1237.9M1527.4 1232.1Q1525.8 1233.8 1525.1 1235Q1525.8 1236.2 1527.4 1237.9M1530.6 1232.1Q1529.0 1233.8 1528.3 1235Q1529.0 1236.2 1530.6 1237.9M1621.3 1232.1Q1622.9 1233.8 1623.6 1235Q1622.9 1236.2 1621.3 1237.9M1624.5 1232.1Q1626.1 1233.8 1626.8 1235Q1626.1 1236.2 1624.5 1237.9M1651.1 1232.1Q1652.7 1233.8 1653.4 1235Q1652.7 1236.2 1651.1 1237.9M1654.3 1232.1Q1655.9 1233.8 1656.6 1235Q1655.9 1236.2 1654.3 1237.9M1658.7 1232.1Q1660.3 1233.8 1661.0 1235Q1660.3 1236.2 1658.7 1237.9M1661.9 1232.1Q1663.5 1233.8 1664.2 1235Q1663.5 1236.2 1661.9 1237.9" fill="none" stroke="#454850" stroke-width="0.95"/></svg>
<div class="b" style="left:1527px;top:1359px;width:211px;height:70px;background:#f00;box-shadow:3px 4px 5px rgba(0,0,0,0.55)"></div>
<div class="b" style="left:1535px;top:1367px;width:195px;height:54px;background:#0480e2;box-shadow:inset 2px 3px 3px rgba(0,0,0,0.42)"></div>
<div class="a" style="left:1549.5px;top:1383.0px;font-size:21px;font-weight:400;color:#fff;letter-spacing:0.3px;">Salvar Alterações</div>
<svg class="b" style="left:0;top:0;overflow:visible" width="1781" height="1488"><defs><filter id="sh" x="-10%" y="-50%" width="120%" height="200%"><feGaussianBlur in="SourceAlpha" stdDeviation="2.2"/><feOffset dx="3" dy="4" result="o"/><feComponentTransfer><feFuncA type="linear" slope="0.75"/></feComponentTransfer><feMerge><feMergeNode/><feMergeNode in="SourceGraphic"/></feMerge></filter></defs>
<g filter="url(#sh)"><path d="M980.5 1397.8L1457 1392.2L1435.5 1358L1550.5 1398.5L1436.4 1441.6L1457.5 1407.2L980.5 1412.8A7.5 7.5 0 0 1 980.5 1397.8Z" fill="#f00"/></g></svg>
</body></html>
